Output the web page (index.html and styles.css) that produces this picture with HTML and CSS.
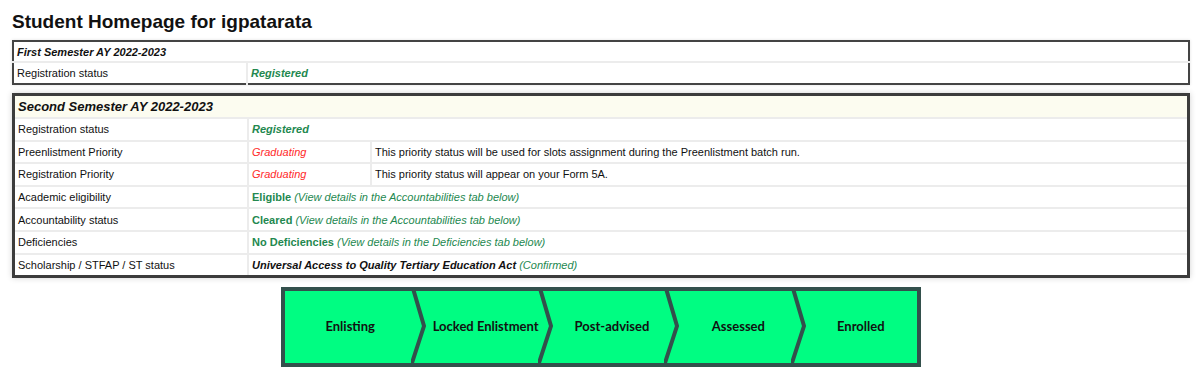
FILE: index.html
```html
<!DOCTYPE html>
<html lang="en">
<head>
    <meta charset="UTF-8">
    <title>Student Homepage</title>
    <link rel="stylesheet" href="styles.css">
</head>
<body>
    <h1 class="page-title">Student Homepage for igpatarata</h1>

    <table class="sem-box">
        <tr class="sem-box__head">
            <th colspan="3">First Semester AY 2022-2023</th>
        </tr>
        <tr>
            <td class="col-label">Registration status</td>
            <td colspan="2" class="ok-italic">Registered</td>
        </tr>
    </table>

    <table class="sem-box sem-box--current">
        <tr class="sem-box__head">
            <th colspan="3">Second Semester AY 2022-2023</th>
        </tr>
        <tr>
            <td class="col-label">Registration status</td>
            <td colspan="2" class="ok-italic">Registered</td>
        </tr>
        <tr>
            <td class="col-label">Preenlistment Priority</td>
            <td class="col-value bad">Graduating</td>
            <td>This priority status will be used for slots assignment during the Preenlistment batch run.</td>
        </tr>
        <tr>
            <td class="col-label">Registration Priority</td>
            <td class="col-value bad">Graduating</td>
            <td>This priority status will appear on your Form 5A.</td>
        </tr>
        <tr>
            <td class="col-label">Academic eligibility</td>
            <td colspan="2" class="ok"><b>Eligible</b> <i>(View details in the Accountabilities tab below)</i></td>
        </tr>
        <tr>
            <td class="col-label">Accountability status</td>
            <td colspan="2" class="ok"><b>Cleared</b> <i>(View details in the Accountabilities tab below)</i></td>
        </tr>
        <tr>
            <td class="col-label">Deficiencies</td>
            <td colspan="2" class="ok"><b>No Deficiencies</b> <i>(View details in the Deficiencies tab below)</i></td>
        </tr>
        <tr>
            <td class="col-label">Scholarship / STFAP / ST status</td>
            <td colspan="2"><b><i>Universal Access to Quality Tertiary Education Act</i></b> <b class="ok"><i>(Confirmed)</i></b></td>
        </tr>
    </table>

    <div class="steps">
        <div class="steps__item">Enlisting
            <svg class="steps__sep" width="20" height="80" viewBox="0 0 20 80"><polyline points="1,-2 13,39 -1,82" /></svg>
        </div>
        <div class="steps__item">Locked Enlistment
            <svg class="steps__sep" width="20" height="80" viewBox="0 0 20 80"><polyline points="1,-2 13,39 -1,82" /></svg>
        </div>
        <div class="steps__item">Post-advised
            <svg class="steps__sep" width="20" height="80" viewBox="0 0 20 80"><polyline points="1,-2 13,39 -1,82" /></svg>
        </div>
        <div class="steps__item">Assessed
            <svg class="steps__sep" width="20" height="80" viewBox="0 0 20 80"><polyline points="1,-2 13,39 -1,82" /></svg>
        </div>
        <div class="steps__item">Enrolled</div>
    </div>
</body>
</html>
```

FILE: styles.css
```css
body {
    margin: 0;
    padding: 0 10px 0 12px;
    font-family: "Liberation Sans", Arial, sans-serif;
    font-size: 11px;
    color: #111;
    background: #fff;
}
.page-title {
    font-size: 19px;
    font-weight: bold;
    margin: 0;
    padding-top: 12px;
    height: 28px;
    line-height: 20px;
}
.sem-box {
    width: 100%;
    border: 2px solid #444;
    border-collapse: collapse;
    margin-bottom: 8px;
    box-shadow: 0 0 3px rgba(0, 0, 0, 0.12);
}
.sem-box th {
    text-align: left;
    font-style: italic;
    font-weight: bold;
    padding: 0 3px;
    height: 19px;
    border-bottom: 2px solid #ececec;
}
.sem-box td {
    height: 20px;
    padding: 0 3px;
    border-bottom: 2px solid #ececec;
    border-left: 2px solid #ececec;
}
.sem-box tr:last-child td {
    border-bottom: none;
}
.sem-box td.col-label {
    width: 226px;
    border-left: none;
}
.sem-box td.col-value {
    width: 115px;
}
.sem-box--current {
    border: 3px solid #3c3c3c;
    box-shadow: 0 0 6px rgba(0, 0, 0, 0.18);
}
.sem-box--current td {
    height: 20.6px;
}
.sem-box--current .sem-box__head th {
    font-size: 13px;
    height: 21px;
    background: #fcfcf0;
}
.ok, .ok-italic {
    color: #23884f;
}
.ok-italic {
    font-style: italic;
    font-weight: bold;
}
.ok i {
    font-weight: normal;
}
.bad {
    color: #ff2a2a;
    font-style: italic;
}
.steps {
    display: flex;
    width: 632px;
    height: 72px;
    margin: 9px auto 0;
    border: 4px solid #33504c;
    background: #00fd82;
    overflow: hidden;
}
.steps__item {
    position: relative;
    box-sizing: border-box;
    flex: none;
    width: 20%;
    display: flex;
    align-items: center;
    justify-content: center;
    white-space: nowrap;
    font-family: Lato, sans-serif;
    font-weight: bold;
    font-size: 13px;
    color: #111;
    padding-left: 22px;
    padding-bottom: 3px;
}
.steps__item:first-child {
    padding-left: 4px;
}
.steps__item:last-child {
    padding-left: 14px;
}
.steps__sep {
    position: absolute;
    right: -20px;
    top: -4px;
    fill: none;
    stroke: #33504c;
    stroke-width: 4;
}
```
